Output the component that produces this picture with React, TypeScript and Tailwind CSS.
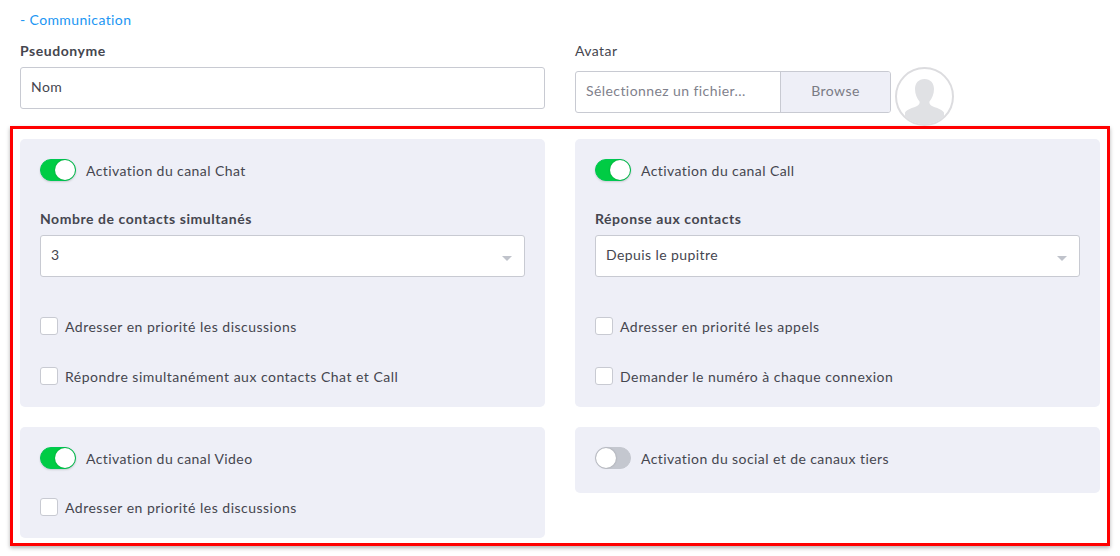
const Toggle = ({ on = true }: { on?: boolean }) => (
  <div
    className={
      on
        ? "flex h-[22px] w-9 shrink-0 justify-end rounded-full border border-[#00c853] bg-[#00cc44] shadow-[0_1px_2px_rgba(0,0,0,0.15)]"
        : "flex h-[22px] w-9 shrink-0 justify-start rounded-full border border-[#c4c7cf] bg-[#c4c7cf]"
    }
  >
    <div className="h-5 w-5 rounded-full bg-white shadow-[0_0_2px_rgba(0,0,0,0.25)]" />
  </div>
);

const SwitchRow = ({ label, on }: { label: string; on?: boolean }) => (
  <div className="flex h-[22px] items-center gap-2.5">
    <Toggle on={on} />
    <span className="pt-0.5 text-sm leading-none">{label}</span>
  </div>
);

const Check = ({ label }: { label: string }) => (
  <div className="flex h-[18px] items-center gap-[7px]">
    <div className="h-[18px] w-[18px] shrink-0 rounded-[3px] border border-[#c8cad2] bg-white" />
    <span className="pt-0.5 text-sm leading-none tracking-[0.49px]">{label}</span>
  </div>
);

const Select = ({ value }: { value: string }) => (
  <div className="flex h-[42px] items-center justify-between rounded-[3px] border border-[#c8cad2] bg-white pl-2.5 pr-3">
    <span className="pb-0.5 text-sm">{value}</span>
    <div className="mt-1 h-0 w-0 border-x-[5px] border-t-[5px] border-x-transparent border-t-[#c0c3cb]" />
  </div>
);

export default function App() {
  return (
    <div className="h-[556px] w-[1120px] overflow-hidden bg-white font-['Lato','Open_Sans',sans-serif] tracking-[0.42px] text-[#45464f]">
      <div className="px-5 pt-3">
        <div className="text-sm leading-4 tracking-[0.38px] text-[#2196f3]">- Communication</div>
        <div className="mt-[11px] flex gap-[30px]">
          <div className="w-[525px]">
            <div className="text-sm font-bold leading-[24px] tracking-[0.55px]">Pseudonyme</div>
            <div className="mt-1 flex h-[42px] items-center rounded-[3px] border border-[#c8cad2] px-2.5 pb-0.5 text-sm">
              Nom
            </div>
          </div>
          <div>
            <div className="text-sm leading-[24px]">Avatar</div>
            <div className="mt-1 flex h-[59px] items-start gap-1">
              <div className="mt-1 flex h-[42px] w-[316px] overflow-hidden rounded-[3px] border border-[#c8cad2]">
                <div className="flex w-[205px] items-center border-r border-[#c8cad2] px-2.5 pb-0.5 text-sm text-[#7f818c]">
                  Sélectionnez un fichier...
                </div>
                <div className="flex flex-1 items-center justify-center bg-[#eeeff7] pb-0.5 text-sm text-[#7a7b85]">
                  Browse
                </div>
              </div>
              <svg width="59" height="59" viewBox="0 0 59 59" className="shrink-0">
                <defs>
                  <clipPath id="avatar-clip">
                    <circle cx="29.5" cy="29.5" r="28" />
                  </clipPath>
                </defs>
                <circle cx="29.5" cy="29.5" r="28.5" fill="#fff" stroke="#dcdcdf" strokeWidth="2" />
                <path
                  clipPath="url(#avatar-clip)"
                  fill="#e0e1e4"
                  d="M29.5 12c-6 0-9.500 4.200-9.500 10 0 5 2 9.500 4.500 12.500 0.500 2-0.500 3.500-3 4.700-4 1.800-9 2.800-11.500 6.300v14h39v-14c-2.500-3.500-7.500-4.500-11.500-6.300-2.500-1.200-3.500-2.700-3-4.700 2.500-3 4.500-7.500 4.500-12.500 0-5.800-3.500-10-9.500-10z"
                />
              </svg>
            </div>
          </div>
        </div>
      </div>

      <div className="ml-2.5 w-[1100px] border-[3px] border-[#ff0000] px-[7px] pb-[5px] pt-[10px] shadow-[0_2px_4px_rgba(0,0,0,0.3)]">
        <div className="grid grid-cols-[525px_525px] items-start gap-x-[30px] gap-y-5">
          <div className="h-[268px] rounded-[5px] bg-[#eeeff7] px-5 pt-5">
            <SwitchRow label="Activation du canal Chat" />
            <div className="mt-[30px] text-sm font-bold leading-4 tracking-[0.55px]">Nombre de contacts simultanés</div>
            <div className="mt-2">
              <Select value="3" />
            </div>
            <div className="mt-10 flex flex-col gap-8">
              <Check label="Adresser en priorité les discussions" />
              <Check label="Répondre simultanément aux contacts Chat et Call" />
            </div>
          </div>
          <div className="h-[268px] rounded-[5px] bg-[#eeeff7] px-5 pt-5">
            <SwitchRow label="Activation du canal Call" />
            <div className="mt-[30px] text-sm font-bold leading-4 tracking-[0.55px]">Réponse aux contacts</div>
            <div className="mt-2">
              <Select value="Depuis le pupitre" />
            </div>
            <div className="mt-10 flex flex-col gap-8">
              <Check label="Adresser en priorité les appels" />
              <Check label="Demander le numéro à chaque connexion" />
            </div>
          </div>
          <div className="h-[111px] rounded-[5px] bg-[#eeeff7] px-5 pt-5">
            <SwitchRow label="Activation du canal Video" />
            <div className="mt-[29px]">
              <Check label="Adresser en priorité les discussions" />
            </div>
          </div>
          <div className="h-[66px] rounded-[5px] bg-[#eeeff7] px-5 pt-5">
            <SwitchRow label="Activation du social et de canaux tiers" on={false} />
          </div>
        </div>
      </div>
    </div>
  );
}
